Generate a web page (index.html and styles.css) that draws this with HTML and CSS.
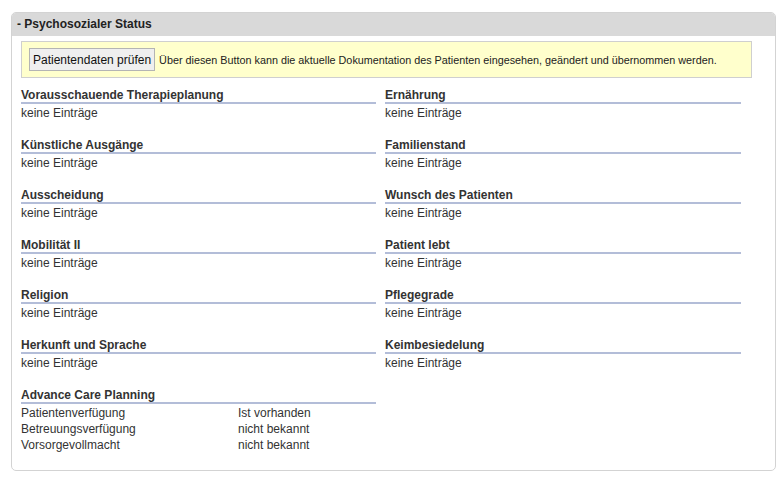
FILE: index.html
```html
<!DOCTYPE html>
<html lang="de">
<head>
<meta charset="utf-8">
<title>Psychosozialer Status</title>
<link rel="stylesheet" href="styles.css">
</head>
<body>
<div class="panel">
  <div class="panel-head">- Psychosozialer Status</div>
  <div class="panel-body">
    <div class="notice">
      <button class="btn" type="button">Patientendaten prüfen</button>
      <span class="notice-text">Über diesen Button kann die aktuelle Dokumentation des Patienten eingesehen, geändert und übernommen werden.</span>
    </div>
    <div class="grid">
      <div class="block"><div class="label">Vorausschauende Therapieplanung</div><div class="value">keine Einträge</div></div>
      <div class="block"><div class="label">Ernährung</div><div class="value">keine Einträge</div></div>
      <div class="block"><div class="label">Künstliche Ausgänge</div><div class="value">keine Einträge</div></div>
      <div class="block"><div class="label">Familienstand</div><div class="value">keine Einträge</div></div>
      <div class="block"><div class="label">Ausscheidung</div><div class="value">keine Einträge</div></div>
      <div class="block"><div class="label">Wunsch des Patienten</div><div class="value">keine Einträge</div></div>
      <div class="block"><div class="label">Mobilität II</div><div class="value">keine Einträge</div></div>
      <div class="block"><div class="label">Patient lebt</div><div class="value">keine Einträge</div></div>
      <div class="block"><div class="label">Religion</div><div class="value">keine Einträge</div></div>
      <div class="block"><div class="label">Pflegegrade</div><div class="value">keine Einträge</div></div>
      <div class="block"><div class="label">Herkunft und Sprache</div><div class="value">keine Einträge</div></div>
      <div class="block"><div class="label">Keimbesiedelung</div><div class="value">keine Einträge</div></div>
      <div class="block last">
        <div class="label">Advance Care Planning</div>
        <div class="acp">
          <span>Patientenverfügung</span><span>Ist vorhanden</span>
          <span>Betreuungsverfügung</span><span>nicht bekannt</span>
          <span>Vorsorgevollmacht</span><span>nicht bekannt</span>
        </div>
      </div>
    </div>
  </div>
</div>
</body>
</html>
```
FILE: styles.css
```css
* { box-sizing: border-box; }
html, body { margin: 0; padding: 0; background: #fff; }
body {
  font-family: "Liberation Sans", Arial, sans-serif;
  color: #333;
  padding: 12px 5px 0 11px;
}
.panel {
  width: 765px;
  height: 459px;
  border: 1px solid #d3d3d3;
  border-radius: 5px;
  overflow: hidden;
}
.panel-head {
  background: #d9d9d9;
  height: 23px;
  line-height: 22px;
  padding-left: 5px;
  font-size: 12px;
  font-weight: bold;
  color: #222;
}
.panel-body {
  padding: 5px 0 0 9px;
}
.notice {
  width: 731px;
  height: 37px;
  background: #ffffcc;
  border: 1px solid #cfcfcf;
  display: flex;
  align-items: center;
  padding-left: 7px;
  gap: 4px;
}
.btn {
  font-family: "Liberation Sans", Arial, sans-serif;
  font-size: 12px;
  color: #111;
  background: #efefef;
  border: 1px solid #b4b4b4;
  height: 23px;
  padding: 0 3px;
  margin: 0;
}
.notice-text {
  font-size: 10.8px;
  color: #222;
}
.grid {
  display: grid;
  grid-template-columns: 355px 356px;
  column-gap: 9px;
  margin-top: 10px;
}
.block { height: 50px; }
.block.last { height: auto; }
.label {
  font-size: 12px;
  font-weight: bold;
  line-height: 14px;
  border-bottom: 2px solid #b3bdd8;
  color: #333;
}
.value {
  font-size: 12px;
  line-height: 16px;
  padding-top: 1px;
}
.acp {
  display: grid;
  grid-template-columns: 217px auto;
  font-size: 12px;
  line-height: 16px;
  padding-top: 1px;
}
```
